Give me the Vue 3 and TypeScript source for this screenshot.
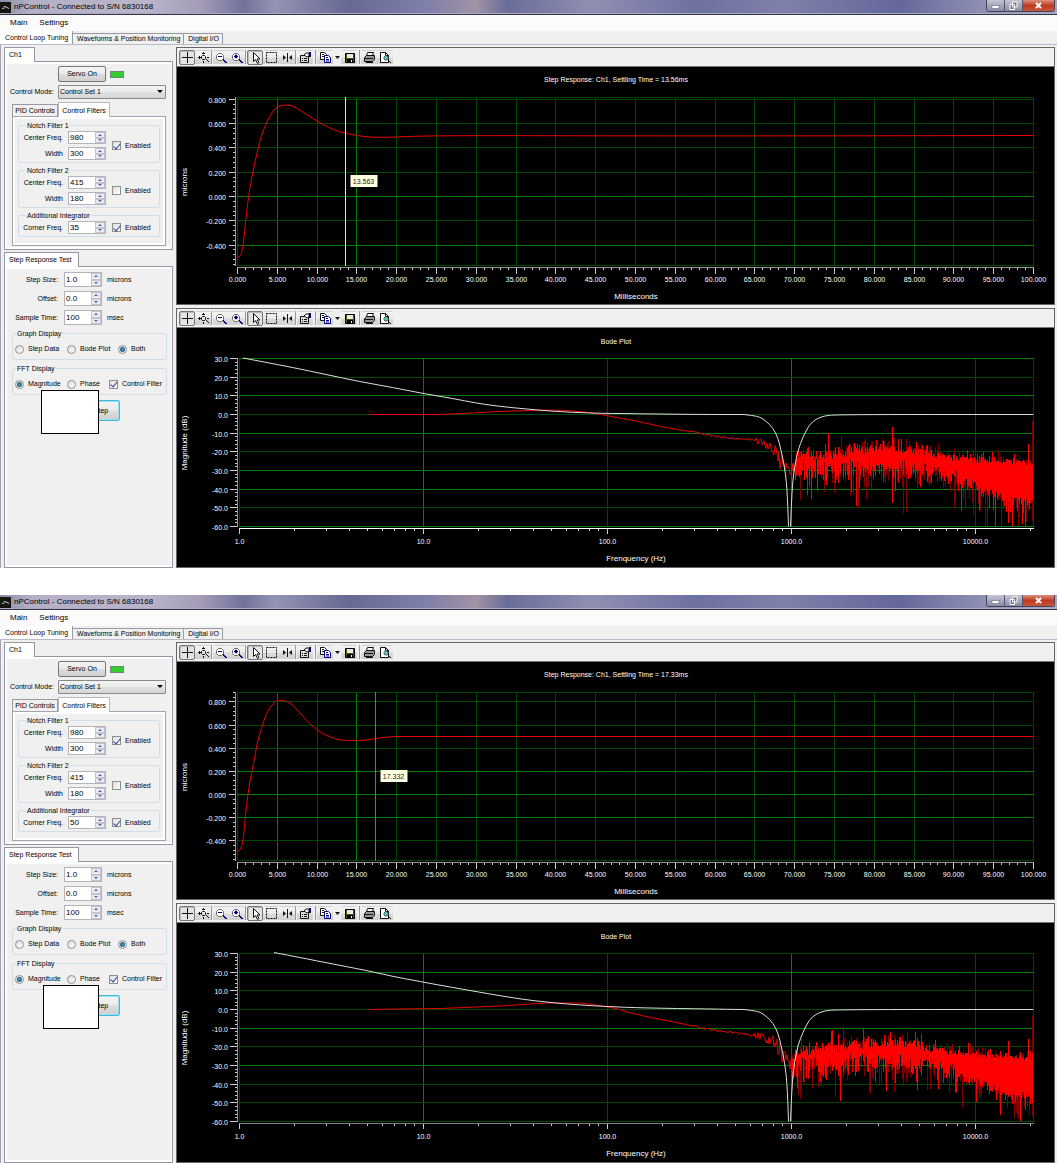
<script setup lang="ts">
type Pt = [number, number]
interface Shape { d: string; fill?: string; stroke?: string; dash?: string }
interface ToolItem { name: string; kind: 'btn' | 'sep' | 'wide' | 'drop'; pressed?: boolean; shapes?: Shape[] }
interface Notch { title: string; center: string; width: string; on: boolean }
interface Win {
  id: string
  settle: string
  notches: Notch[]
  corner: string
  step: { zero: number; unit: number; bright: number[]; curve: string; cursor: number; label: string; cursorColor: string }
  bode: { bright: number[]; axis: string; white: string; red: string; mass: string; spikes: string }
}

const K = '#111', B = '#000080', G = '#666'
const tools: ToolItem[] = [
  { name: 'Pan', kind: 'btn', pressed: true, shapes: [{ d: 'M6.5 1v11M1 6.5h11', stroke: K }] },
  { name: 'Zoom axes', kind: 'btn', shapes: [{ d: 'M1 6.5h3M2.500 5v3M5 2.500h3M6.500 1v2M9 8l3 3M10 6.500h2M6.500 10v2', stroke: K }, { d: 'M4.500 5.500l1-1h2l1 1v2l-1 1h-2l-1-1z', stroke: K }] },
  { name: '', kind: 'sep' },
  { name: 'Zoom out', kind: 'btn', shapes: [{ d: 'M1.5 4.500l2-2h3l2 2v3l-2 2h-3l-2-2z', stroke: G, fill: '#fff' }, { d: 'M3 5.500h4M8 9l3 3', stroke: B }, { d: 'M8 8l4 4', stroke: B }] },
  { name: 'Zoom in', kind: 'btn', shapes: [{ d: 'M1.5 4.500l2-2h3l2 2v3l-2 2h-3l-2-2z', stroke: G, fill: '#fff' }, { d: 'M3 5.500h4M5 3.500v4M8 9l3 3', stroke: B }, { d: 'M4 4.500h2v2h-2zM8 8l4 4', stroke: B }] },
  { name: '', kind: 'sep' },
  { name: 'Select', kind: 'btn', pressed: true, shapes: [{ d: 'M4.500 1.500v9l2-2 2 4 1.500-1-2-3.500h3z', stroke: K, fill: '#fff' }] },
  { name: 'Zoom box', kind: 'btn', shapes: [{ d: 'M1.500 1.500h10v10h-10z', stroke: K, dash: '2 1' }] },
  { name: 'Data cursor', kind: 'btn', shapes: [{ d: 'M6.500 2v9', stroke: K }, { d: 'M2 4l3 2.500-3 2.500zM11 4l-3 2.500 3 2.500z', fill: K }] },
  { name: '', kind: 'sep' },
  { name: 'Properties', kind: 'btn', shapes: [{ d: 'M1.500 4.500h8v7h-8z', stroke: K, fill: '#ddd' }, { d: 'M3 7.500h1M5 7.500h3M3 9.500h1M5 9.500h3', stroke: K }, { d: 'M5 4l2-2h3v3l-2 1z', fill: '#fff', stroke: K }, { d: 'M10 1h2v5h-2z', fill: B }] },
  { name: '', kind: 'wide' },
  { name: 'Copy', kind: 'btn', shapes: [{ d: 'M1.500 1.500h4l2 2v5h-6z', stroke: K, fill: '#fff' }, { d: 'M3 3.500h2M3 5.500h3', stroke: K }, { d: 'M5.500 4.500h4l2 2v5h-6z', stroke: B, fill: '#fff' }, { d: 'M7 6.500h2M7 8.500h3M7 10h3', stroke: B }] },
  { name: 'Copy options', kind: 'drop', shapes: [{ d: 'M1 5h5l-2.500 3z', fill: K }] },
  { name: 'Save', kind: 'btn', shapes: [{ d: 'M2.500 2.500h9v9h-9z', stroke: '#000', fill: '#55550a' }, { d: 'M4 3h6v4H4z', fill: '#e8e8e8' }, { d: 'M4 8h6v3H4z', fill: '#000' }, { d: 'M8 9h1v2h-1z', fill: '#fff' }] },
  { name: '', kind: 'wide' },
  { name: 'Print', kind: 'btn', shapes: [{ d: 'M4.500 1.500h6l-1 3h-6z', stroke: K, fill: '#fff' }, { d: 'M1.500 6.500l2-2h8v4l-2 2h-8z', stroke: K, fill: '#999' }, { d: 'M2 7.500h8M3 11.500h7', stroke: K }] },
  { name: 'Print preview', kind: 'btn', shapes: [{ d: 'M1.500 1.500h5l3 3v7h-8z', stroke: K, fill: '#fff' }, { d: 'M6.500 1.500v3h3', stroke: K }, { d: 'M5 6l1-1h2l1 1v2l-1 1h-2l-1-1z', fill: '#5cc', stroke: G }, { d: 'M9 9l3 3', stroke: K }] },
]

/* Smooth line through the points (midpoint quadratics). */
function smooth(p: Pt[]): string {
  let d = `M${p[0][0]} ${p[0][1]}`
  for (let i = 1; i < p.length - 1; i++) {
    const mx = (p[i][0] + p[i + 1][0]) / 2
    const my = (p[i][1] + p[i + 1][1]) / 2
    d += `Q${p[i][0]} ${p[i][1]} ${mx.toFixed(1)} ${my.toFixed(1)}`
  }
  const l = p[p.length - 1]
  return d + `L${l[0]} ${l[1]}`
}
function interp(p: Pt[], x: number): number {
  for (let i = 1; i < p.length; i++) {
    if (x <= p[i][0]) {
      const t = (x - p[i - 1][0]) / (p[i][0] - p[i - 1][0])
      return p[i - 1][1] + t * (p[i][1] - p[i - 1][1])
    }
  }
  return p[p.length - 1][1]
}
function rng(seed: number) {
  let s = seed
  return () => {
    s = (s * 1664525 + 1013904223) % 4294967296
    return s / 4294967296
  }
}

/* Low-frequency trace with a jitter that grows towards 1 kHz. */
function redLine(p: Pt[], seed: number): string {
  const r = rng(seed)
  let d = `M${p[0][0]} ${p[0][1]}`
  for (let x = p[0][0] + 1; x <= 792; x++) {
    const a = x < 690 ? 0 : x < 755 ? 1 : x < 770 ? 4 : 10
    d += `L${x} ${(interp(p, x) + (r() - 0.5) * 2 * a).toFixed(1)}`
  }
  return d
}
const topEnv: Pt[] = [[792, 465], [800, 457], [805, 454], [830, 453], [850, 449], [870, 447], [890, 447], [920, 450], [950, 456], [975, 460], [1033, 463]]
const botEnv: Pt[] = [[792, 479], [800, 472], [830, 473], [870, 471], [900, 470], [930, 474], [960, 481], [976, 487], [1000, 498], [1033, 504]]
function noise(seed: number): { mass: string; spikes: string } {
  const r = rng(seed)
  let mass = ''
  let spikes = ''
  for (let x = 792; x <= 1032; x++) {
    const loose = x < 870 ? 10 : x < 960 ? 8 : 4
    const t = interp(topEnv, x) + (r() - 0.3) * loose
    const b = interp(botEnv, x) + (r() - 0.7) * loose * 2
    mass += `M${x + 0.5} ${Math.round(Math.min(t, b - 3))}V${Math.round(Math.max(b, t + 3))}`
    const up = Math.min(18, -Math.log(1 - r()) * 4)
    const down = Math.min(38, -Math.log(1 - r()) * 9)
    const seg = `M${x + 0.5} ${Math.round(t - up)}V${Math.min(526, Math.round(b + down))}`
    if (r() < 0.42) mass += seg
    else spikes += seg
  }
  spikes += 'M1032.5 421V521'
  mass += 'M1028.500 444V480'
  return { mass, spikes }
}

const notch: Pt[] = [[744, 414.5], [753, 415.5], [760, 417], [766, 421], [773, 428], [778, 438], [781, 450], [784.500, 467], [787, 487], [788.500, 526.500]]
const notchUp: Pt[] = [[790.500, 526.500], [792, 487], [794.500, 467], [798, 450], [803, 437], [809, 425], [816, 419], [824, 416], [834, 414.500], [1033, 414.500]]

const redA: Pt[] = [[369, 414.500], [440, 414.500], [470, 413], [500, 411.500], [545, 410], [565, 410.500], [585, 412], [607, 415.500], [616, 417.500], [636, 421], [663, 427], [693, 432], [716, 436.500], [733, 438.500], [752, 439.500], [763, 443], [769, 447], [776, 454], [783, 464], [788, 470], [792, 472]]
const redB: Pt[] = [[369, 414.500], [397, 414], [440, 413.500], [500, 411], [545, 408], [580, 408], [596, 410], [607, 412], [616, 413.500], [629, 417.500], [646, 421.500], [669, 426], [693, 431], [716, 435.500], [733, 437.500], [752, 440], [763, 442], [771, 447], [779, 456], [786, 466], [792, 470]]

const windows: Win[] = [
  {
    id: 'a', settle: '13.56ms', corner: '35',
    notches: [
      { title: 'Notch Filter 1', center: '980', width: '300', on: true },
      { title: 'Notch Filter 2', center: '415', width: '180', on: false },
    ],
    step: {
      zero: 196.500, unit: 121.500, bright: [0, -4], cursor: 345.500, label: '13.563', cursorColor: '#ffff00',
      curve: smooth([[237, 257.500], [240, 257], [242, 252], [244, 238], [247, 208], [250, 187], [253, 171], [258, 149], [261, 136], [266, 124], [271, 114], [275, 108.500], [280, 105.500], [286, 105], [292, 105.500], [300, 110], [309, 116], [319, 122.500], [329, 127.500], [338, 131.500], [346, 133], [358, 136], [376, 137.500], [396, 137], [420, 136], [476, 135.500], [700, 136], [1033, 135.500]]),
    },
    bode: {
      bright: [30, 10, -10, -30, -40, -60], axis: '#fff',
      white: smooth([[243, 358], [259, 361], [293, 367.500], [326, 374.500], [359, 381.500], [393, 387.500], [423, 393.500], [453, 398.500], [476, 403], [496, 406], [526, 409], [556, 411.500], [589, 413], [616, 413.500], [700, 414.500], [744, 414.500]]),
      red: redLine(redA, 7), ...noise(11),
    },
  },
  {
    id: 'b', settle: '17.33ms', corner: '50',
    notches: [
      { title: 'Notch Filter 1', center: '980', width: '300', on: true },
      { title: 'Notch Filter 2', center: '415', width: '180', on: false },
    ],
    step: {
      zero: 199.500, unit: 115.700, bright: [2, 0, -2], cursor: 375.500, label: '17.332', cursorColor: '#808000',
      curve: smooth([[237, 256.500], [240, 256], [243, 247], [245, 225], [248, 198], [251, 180], [254, 167], [257, 148], [262, 132], [266, 119], [271, 111], [275, 106.500], [278, 105.500], [284, 105], [291, 108.500], [298, 115.500], [308, 127], [316, 134.500], [326, 140.500], [336, 144], [343, 145.500], [363, 145.500], [373, 144], [386, 142], [396, 141.500], [420, 141.500], [700, 141.500], [1033, 141.500]]),
    },
    bode: {
      bright: [20, -10, -30], axis: '#808080',
      white: smooth([[274, 357.500], [300, 362.500], [333, 369], [367, 375.500], [393, 381.500], [420, 386.500], [450, 392], [490, 399], [520, 404], [550, 407.500], [580, 410], [607, 411.500], [644, 413], [711, 414], [744, 414.500]]),
      red: redLine(redB, 19), ...noise(29),
    },
  },
]

const white2 = smooth(notch) + smooth(notchUp)
const xMs = Array.from({ length: 21 }, (_, i) => ({ x: Math.round(237 + i * 39.8) + 0.5, t: (i * 5).toFixed(3), bright: i === 1 || i === 3 }))
const xMsMinor = Array.from({ length: 101 }, (_, i) => Math.round(237 + i * 7.96) + 0.5)
const yVals = [8, 6, 4, 2, 0, -2, -4]
const stepMinor = Array.from({ length: 40 }, (_, i) => 24 - i).map(i => i * 0.04)
function sy(w: Win, v: number) { return Math.floor(w.step.zero - v * w.step.unit) + 0.5 }
function minors(w: Win) { return stepMinor.map(v => sy(w, v)).filter(y => y > 97 && y < 266) }
const dbs = [30, 20, 10, 0, -10, -20, -30, -40, -50, -60]
function dy(v: number) { return Math.floor(414.5 - v * 1.867) + 0.5 }
const dbMinor = Array.from({ length: 46 }, (_, i) => dy(30 - i * 2))
const decades = [0, 1, 2, 3, 4].map(i => ({ x: 239.5 + i * 184, t: (10 ** i).toFixed(1), bright: i % 2 === 1 }))
const logMinor: number[] = []
for (let d = 0; d < 5; d++) for (let k = 2; k < 10; k++) {
  const x = 239 + 184 * (d + Math.log10(k))
  if (x < 1034) logMinor.push(Math.floor(x) + 0.5)
}
</script>

<template>
  <main class="page">
    <section v-for="w in windows" :key="w.id" class="win">
      <header class="titlebar">
        <svg class="appicon" viewBox="0 0 11 11" width="11" height="11"><rect width="11" height="11" fill="#15150f" /><path d="M2 6.500h2v-2h2v1h2v1h1" stroke="#aaa" fill="none" /></svg>
        <h1>nPControl - Connected to S/N 6830168</h1>
        <div class="winbtns">
          <button class="wb" aria-label="Minimize"><svg width="9" height="9" viewBox="0 0 9 9"><rect x="1" y="4.500" width="7" height="3" fill="#fff" stroke="#556" stroke-width=".5" /></svg></button>
          <button class="wb" aria-label="Restore"><svg width="9" height="9" viewBox="0 0 9 9"><path d="M3.500 1h4.500v5h-4.500zM1 3.500h4.500v5H1z" fill="#778" stroke="#fff" /></svg></button>
          <button class="wb close" aria-label="Close"><svg width="9" height="9" viewBox="0 0 9 9"><path d="M2 2l5 5M7 2l-5 5" stroke="#fff" stroke-width="2" /></svg></button>
        </div>
      </header>
      <nav class="menubar"><button>Main</button><button>Settings</button></nav>
      <nav class="tabs">
        <button class="tab on">Control Loop Tuning</button>
        <button class="tab">Waveforms &amp; Position Monitoring</button>
        <button class="tab">Digital I/O</button>
      </nav>
      <div class="body">
        <aside class="side">
          <button class="ptab">Ch1</button>
          <div class="panel">
            <div class="panel-in channel">
              <div class="servo"><button class="btn">Servo On</button><span class="led"></span></div>
              <div class="mode">
                <label :for="'mode' + w.id">Control Mode:</label>
                <div class="selwrap"><select :id="'mode' + w.id"><option>Control Set 1</option></select></div>
              </div>
              <div class="subtabs"><button class="stab">PID Controls</button><button class="stab on">Control Filters</button></div>
              <div class="filters">
                <fieldset v-for="(n, i) in w.notches" :key="n.title" class="notch">
                  <legend>{{ n.title }}</legend>
                  <div class="fields">
                    <label :for="w.id + 'c' + i">Center Freq.</label>
                    <span class="spin"><input :id="w.id + 'c' + i" type="text" :value="n.center" /><span class="ud"><button aria-label="Up" class="u"></button><button aria-label="Down" class="d"></button></span></span>
                    <label :for="w.id + 'w' + i">Width</label>
                    <span class="spin"><input :id="w.id + 'w' + i" type="text" :value="n.width" /><span class="ud"><button aria-label="Up" class="u"></button><button aria-label="Down" class="d"></button></span></span>
                  </div>
                  <label class="opt"><input type="checkbox" :checked="n.on" />Enabled</label>
                </fieldset>
                <fieldset class="notch">
                  <legend>Additional Integrator</legend>
                  <div class="fields">
                    <label :for="w.id + 'k'">Corner Freq.</label>
                    <span class="spin"><input :id="w.id + 'k'" type="text" :value="w.corner" /><span class="ud"><button aria-label="Up" class="u"></button><button aria-label="Down" class="d"></button></span></span>
                  </div>
                  <label class="opt"><input type="checkbox" checked />Enabled</label>
                </fieldset>
              </div>
            </div>
          </div>
          <button class="ptab second">Step Response Test</button>
          <div class="panel grow">
            <div class="panel-in test">
              <div class="params">
                <template v-for="r in [['Step Size:', '1.0', 'microns'], ['Offset:', '0.0', 'microns'], ['Sample Time:', '100', 'msec']]" :key="r[0]">
                  <label :for="w.id + r[0]">{{ r[0] }}</label>
                  <span class="spin big"><input :id="w.id + r[0]" type="text" :value="r[1]" /><span class="ud"><button aria-label="Up" class="u"></button><button aria-label="Down" class="d"></button></span></span>
                  <span>{{ r[2] }}</span>
                </template>
              </div>
              <fieldset class="row">
                <legend>Graph Display</legend>
                <label class="opt c1"><input type="radio" :name="'g' + w.id" />Step Data</label>
                <label class="opt c2"><input type="radio" :name="'g' + w.id" />Bode Plot</label>
                <label class="opt"><input type="radio" :name="'g' + w.id" checked />Both</label>
              </fieldset>
              <fieldset class="row">
                <legend>FFT Display</legend>
                <label class="opt c1"><input type="radio" :name="'f' + w.id" checked />Magnitude</label>
                <label class="opt c3"><input type="radio" :name="'f' + w.id" />Phase</label>
                <label class="opt"><input type="checkbox" checked />Control Filter</label>
              </fieldset>
              <div class="action">
                <button class="btn focus">Step</button>
                <span class="cover" :class="w.id"></span>
              </div>
            </div>
          </div>
        </aside>

        <div class="charts">
          <section v-for="c in ['step', 'bode']" :key="c" class="chart">
            <div class="toolbar">
              <template v-for="(t, i) in tools" :key="i">
                <button v-if="t.shapes" class="tool" :class="[t.kind, { pressed: t.pressed }]" :aria-label="t.name">
                  <svg :width="t.kind === 'drop' ? 7 : 13" height="13" :viewBox="t.kind === 'drop' ? '0 0 7 13' : '0 0 13 13'">
                    <path v-for="(s, k) in t.shapes" :key="k" :d="s.d" :fill="s.fill || 'none'" :stroke="s.stroke || 'none'" :stroke-dasharray="s.dash" />
                  </svg>
                </button>
                <span v-else class="sep" :class="t.kind"></span>
              </template>
            </div>

            <svg v-if="c === 'step'" class="plot" viewBox="177 67 877 237">
              <g class="crisp">
                <path v-for="x in xMs" :key="x.t" :d="`M${x.x} 97V266`" :stroke="x.bright ? '#008000' : '#004800'" />
                <path d="M237 97.500H1034M237 265.500H1034" stroke="#004800" />
                <path v-for="v in yVals" :key="v" :d="`M237 ${sy(w, v / 10)}H1034`" :stroke="w.step.bright.includes(v) ? '#008000' : '#004800'" />
                <path d="M235.500 97V266M237 267.500H1034" stroke="#999" />
                <path v-for="v in yVals" :key="'t' + v" :d="`M229 ${sy(w, v / 10)}h6`" stroke="#ccc" />
                <path v-for="y in minors(w)" :key="'m' + y" :d="`M233 ${y}h2`" stroke="#ccc" />
                <path v-for="x in xMs" :key="'t' + x.t" :d="`M${x.x} 268v6`" stroke="#ccc" />
                <path v-for="x in xMsMinor" :key="'m' + x" :d="`M${x} 268v2`" stroke="#ccc" />
              </g>
              <path :d="w.step.curve" class="trace" />
              <path class="crisp" :d="`M${w.step.cursor} 97V266`" :stroke="w.step.cursorColor" />
              <text x="616" y="82" class="mid">Step Response: Ch1, Settling Time = {{ w.settle }}</text>
              <text v-for="v in yVals" :key="v" x="226" :y="sy(w, v / 10) + 3" class="end">{{ (v / 10).toFixed(3) }}</text>
              <text v-for="x in xMs" :key="x.t" :x="x.x" y="282" class="mid">{{ x.t }}</text>
              <text x="636" y="299" class="mid name">Milliseconds</text>
              <text transform="translate(187 182) rotate(-90)" class="mid name">microns</text>
              <rect :x="w.step.cursor + 5" y="175" width="27" height="12" fill="#ffffe1" />
              <text :x="w.step.cursor + 18" y="184" class="mid tip">{{ w.step.label }}</text>
            </svg>

            <svg v-else class="plot" viewBox="177 328 877 239">
              <g class="crisp">
                <path v-for="x in decades" :key="x.t" :d="`M${x.x} 358V527`" :stroke="x.bright ? '#008000' : '#004800'" />
                <path d="M1033.500 358V527" stroke="#004800" />
                <path v-for="v in dbs" :key="v" :d="`M239 ${dy(v)}H1034`" :stroke="w.bode.bright.includes(v) ? '#008000' : '#004800'" />
                <path d="M237.500 358V527" stroke="#999" />
                <path d="M239 528.500H1034" :stroke="w.bode.axis" />
                <path v-for="v in dbs" :key="'t' + v" :d="`M230 ${dy(v)}h7`" stroke="#ccc" />
                <path v-for="y in dbMinor" :key="'m' + y" :d="`M235 ${y}h2`" stroke="#ccc" />
                <path v-for="x in decades" :key="'t' + x.t" :d="`M${x.x} 529v5`" stroke="#ccc" />
                <path v-for="x in logMinor" :key="'m' + x" :d="`M${x} 529v2`" stroke="#ccc" />
              </g>
              <path :d="w.bode.red" class="trace" />
              <path :d="w.bode.spikes" class="crisp" stroke="#800000" />
              <path :d="w.bode.mass" class="crisp" stroke="#ff0000" />
              <path :d="w.bode.white" class="filter" />
              <path :d="white2" class="filter" />
              <text x="616" y="344" class="mid">Bode Plot</text>
              <text v-for="v in dbs" :key="v" x="228" :y="dy(v) + 3" class="end">{{ v.toFixed(1) }}</text>
              <text v-for="x in decades" :key="x.t" :x="x.x" y="544" class="mid">{{ x.t }}</text>
              <text x="636" y="561" class="mid name">Frenquency (Hz)</text>
              <text transform="translate(187 443) rotate(-90)" class="mid name">Magnitude (dB)</text>
            </svg>
          </section>
        </div>
      </div>
    </section>
  </main>
</template>

<style>
body { margin: 0; background: #fff; }
</style>

<style scoped>
* { box-sizing: border-box; }
.page { display: flex; flex-direction: column; gap: 27px; font: 7px/10px "Liberation Sans", Arial, sans-serif; color: #000; }
button, input, select { font: inherit; color: inherit; margin: 0; padding: 0; border: 0; background: none; }
button { white-space: nowrap; }
label, legend, span { white-space: nowrap; }
.win { background: #f0f0f0; }
.titlebar { height: 15px; display: flex; align-items: center; gap: 3px; border-bottom: 1px solid #35354a; box-shadow: inset 0 -1px #a9a9c4;
  background: linear-gradient(90deg, #8c8ca6 0, #b3b0c6 3%, #b9b4ca 14%, #a49cb8 19%, #72739b 23%, #9493b4 26%, #676994 33%, #7d7eaa 40%, #a292a6 45%, #6b6d99 48%, #8f8fb4 56%, #6e70a0 66%, #7f80aa 74%, #65679a 85%, #8f90b4 93%, #a8a8c4 100%); }
.appicon { display: block; }
h1 { margin: 0; flex: 1; font: 8px/12px "Liberation Sans", Arial, sans-serif; color: #000; }
.winbtns { display: flex; align-self: flex-start; margin-right: 2px; border: 1px solid #444459; border-top: 0; border-radius: 0 0 3px 3px; overflow: hidden; }
.wb { width: 18px; height: 11px; display: grid; place-items: center; background: linear-gradient(#c5c5d6, #8a8aa4); border-right: 1px solid #555568; }
.wb.close { width: 31px; border: 0; background: linear-gradient(#dd9080, #c03a22 50%, #c8553a); }
.menubar { height: 16px; background: #fbfbfb; display: flex; align-items: center; gap: 12px; padding-left: 10px; font-size: 8px; }
.tabs { height: 14px; display: flex; align-items: flex-end; border-bottom: 1px solid #bbbbc6; }
.tab { height: 11px; border: 1px solid #9a9aa4; border-width: 1px 1px 0 0; padding: 0 3px 0 4px; line-height: 10px; }
.tab.on { height: 13px; background: #fff; border-width: 0 1px 0 0; padding: 0 4px 0 5px; }
.body { display: flex; gap: 3px; padding: 2px 2px 0 4px; box-shadow: inset 1px 0 #a4a4b0; }
.side { width: 169px; display: flex; flex-direction: column; align-items: flex-start; }
.ptab { height: 15px; background: #fff; border: 1px solid #9696a4; border-bottom: 0; padding: 0 12px 0 4px; margin-bottom: -1px; z-index: 1; line-height: 12px; }
.ptab.second { margin-top: 2px; padding-right: 6px; }
.panel { width: 100%; background: #fff; border: 1px solid #9696a4; padding: 2px 1px 2px 2px; }
.grow { flex: 1; display: flex; }
.panel-in { background: #f0f0f0; width: 100%; }
.channel { padding: 2px 5px 1px; }
.servo { display: flex; align-items: center; gap: 4px; padding-left: 46px; }
.btn { height: 16px; width: 48px; border: 1px solid #777; border-radius: 2px; background: linear-gradient(#f3f3f3, #ebebeb 48%, #dcdcdc 52%, #d0d0d0); text-align: center; }
.led { width: 14px; height: 7px; background: #33cc33; border: 1px solid #6a8a6a; }
.mode { display: flex; align-items: center; justify-content: flex-end; gap: 4px; margin-top: 3px; }
.selwrap { position: relative; }
.selwrap::after { content: ""; position: absolute; right: 3px; top: 5px; border: 3px solid transparent; border-top-color: #000; border-bottom: 0; pointer-events: none; }
select { appearance: none; display: block; width: 108px; height: 14px; border: 1px solid #8a8a8a; border-radius: 1px; padding-left: 1px; background: linear-gradient(#f3f3f3, #ebebeb 48%, #dfdfdf 52%, #d6d6d6); }
.subtabs { display: flex; align-items: flex-end; margin-top: 3px; height: 14px; }
.stab { height: 12px; width: 46px; border: 1px solid #9a9aa4; border-bottom: 0; line-height: 11px; }
.stab.on { height: 15px; width: 52px; background: #fff; border-color: #b8b8c4; margin-bottom: -1px; }
.filters { border: 1px solid #a4a4b0; background: #f0f0f0; box-shadow: inset 0 0 0 2px #fff; padding: 3px 5px 8px; display: flex; flex-direction: column; gap: 2px; }
fieldset { margin: 0; min-width: 0; border: 1px solid #d3dde6; border-radius: 2px; padding: 0; }
legend { padding: 0 1px; margin-left: 4px; line-height: 11px; height: 11px; }
.notch { display: flex; align-items: center; gap: 6px; padding: 0 0 2px 3px; }
.fields { display: grid; grid-template-columns: 41px 37px; column-gap: 6px; row-gap: 3px; align-items: center; justify-items: end; }
.spin { display: flex; width: 38px; height: 13px; border: 1px solid #b4b4ba; background: #fff; }
.spin input { flex: 1; min-width: 0; padding-left: 1px; outline: 0; height: 100%; font-size: 8px; }
.ud { width: 10px; display: flex; flex-direction: column; }
.ud button { flex: 1; border: 1px solid #c4c4cc; background: #ececf0; display: grid; place-items: center; min-height: 0; }
.u::before, .d::before { content: ""; border: 2px solid transparent; }
.u::before { border-bottom-color: #4a62a8; border-top: 0; }
.d::before { border-top-color: #4a62a8; border-bottom: 0; }
.opt { display: inline-flex; align-items: center; gap: 4px; }
.opt input { flex: none; appearance: none; width: 9px; height: 9px; border: 1px solid #8e8f8f; background: linear-gradient(135deg, #dcdcdc, #fff); display: grid; place-items: center; }
.opt input[type=radio] { border-radius: 50%; }
.opt input[type=radio]:checked::before { content: ""; width: 5px; height: 5px; border-radius: 50%; background: radial-gradient(#3fa4c8, #0e3a5c); }
.opt input[type=checkbox]:checked::before { content: ""; width: 3px; height: 6px; border: solid #2f3f8f; border-width: 0 1px 1px 0; transform: rotate(40deg); margin-top: -1px; }
.test { padding: 3px 4px 0 5px; }
.params { display: grid; grid-template-columns: 46px 37px auto; column-gap: 6px; row-gap: 4px; align-items: center; }
.params label { text-align: right; }
.big { height: 15px; }
.row { display: flex; align-items: center; height: 32px; margin-top: 3px; padding-left: 2px; }
.row legend { margin-left: 1px; }
.row .opt { height: 16px; }
.c1 { width: 52px; }
.c2 { width: 51px; }
.c3 { width: 42px; }
.action { position: relative; padding: 5px 0 0 70px; }
.btn.focus { width: 38px; height: 21px; border-color: #3fb8dc; box-shadow: inset 0 0 0 1px #9ce0f2; }
.cover { position: absolute; left: 29px; top: -5px; width: 58px; height: 44px; background: #fff; border: 1px solid #000; }
.cover.b { left: 31px; width: 56px; }
.charts { flex: 1; min-width: 0; display: flex; flex-direction: column; gap: 3px; }
.chart { border: 1px solid #666; background: #000; }
.toolbar { height: 19px; background: #f0f0f0; border-bottom: 1px solid #777; display: flex; align-items: center; padding-left: 2px; }
.tool { width: 16px; height: 15px; display: grid; place-items: center; border: 1px solid transparent; border-radius: 2px; }
.tool.drop { width: 8px; }
.tool.pressed { border-color: #777; background: #e4e4e4; box-shadow: inset 1px 1px #bbb; }
.sep { width: 2px; height: 14px; border-left: 1px solid #999; }
.sep.wide { width: 4px; border-left: 0; background: linear-gradient(#999, #999) 2px 0 / 1px 100% no-repeat; }
.plot { display: block; width: 100%; height: auto; font-size: 7px; }
.plot path { fill: none; }
.crisp { shape-rendering: crispEdges; }
.trace { stroke: #e80000; }
.filter { stroke: #ddd; }
text { fill: #fff; }
.name { font-size: 8px; }
.mid { text-anchor: middle; }
.end { text-anchor: end; }
.tip { fill: #222; }
</style>
